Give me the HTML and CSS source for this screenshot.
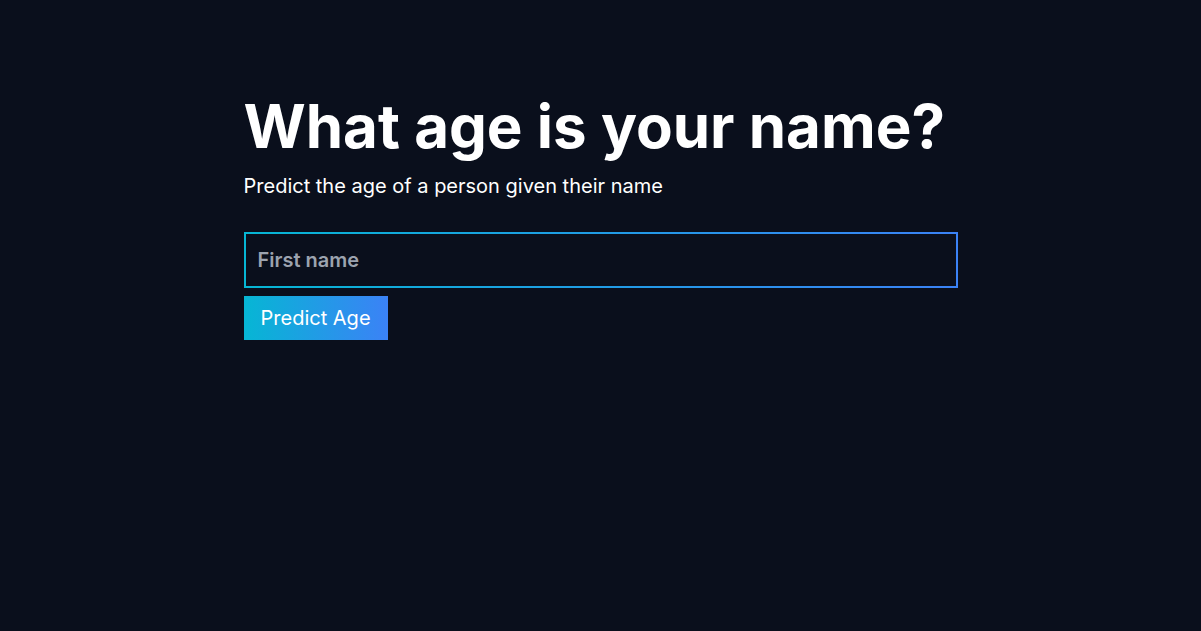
FILE: index.html
```html
<!DOCTYPE html>
<html lang="en">
<head>
<meta charset="utf-8">
<title>What age is your name?</title>
<link rel="stylesheet" href="styles.css">
</head>
<body>
<main class="container">
  <h1 class="title">What age is your name?</h1>
  <p class="subtitle">Predict the age of a person given their name</p>
  <form class="form">
    <div class="input-wrap">
      <input class="name-input" type="text" placeholder="First name">
    </div>
    <button class="btn" type="button">Predict Age</button>
  </form>
</main>
</body>
</html>
```
FILE: styles.css
```css
* { box-sizing: border-box; }
html, body {
  margin: 0;
  height: 100%;
}
body {
  background: #0a0f1c;
  color: #ffffff;
  font-family: Inter, "Noto Sans", sans-serif;
}
.container {
  max-width: 714px;
  margin: 0 auto;
  padding-top: 96px;
}
.title {
  margin: 0;
  font-size: 60px;
  line-height: 60px;
  font-weight: 700;
}
.subtitle {
  margin: 16px 0 0;
  font-size: 20px;
  line-height: 28px;
}
.form {
  margin-top: 32px;
  display: flex;
  flex-direction: column;
  align-items: flex-start;
  gap: 8px;
}
.input-wrap {
  width: 100%;
  padding: 2px;
  background: linear-gradient(90deg, #06b6d4, #3b82f6);
}
.name-input {
  display: block;
  width: 100%;
  height: 52px;
  border: 0;
  outline: none;
  background: #0a0f1c;
  color: #ffffff;
  font-family: Inter, "Noto Sans", sans-serif;
  font-size: 20px;
  font-weight: 600;
  padding: 0 12px;
}
.name-input::placeholder {
  color: #9ca3af;
}
.btn {
  height: 44px;
  padding: 0 17px;
  border: 0;
  background: linear-gradient(90deg, #06b6d4, #3b82f6);
  color: #ffffff;
  font-family: Inter, "Noto Sans", sans-serif;
  font-size: 20px;
  cursor: pointer;
}
```
